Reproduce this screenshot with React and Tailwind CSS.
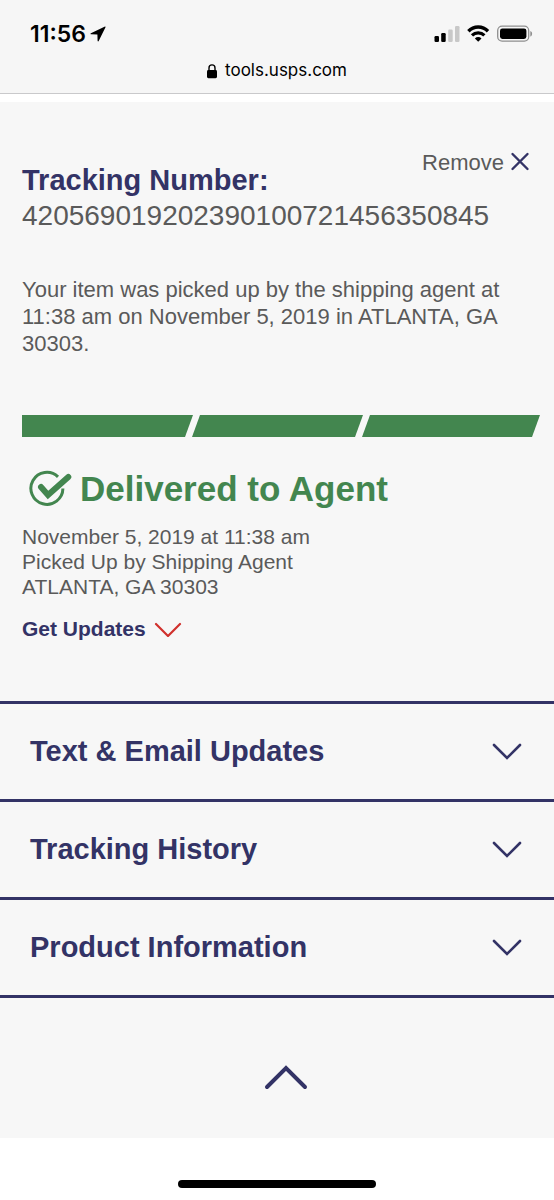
const accordionItems = ['Text & Email Updates', 'Tracking History', 'Product Information'];

function StatusIcons() {
    return (
        <svg width="100" height="18" viewBox="0 0 100 18" aria-hidden="true">
            {/* Signal */}
            <rect x="0.5" y="11" width="4.5" height="6" rx="1.2" fill="#000" />
            <rect x="7.2" y="8" width="4.5" height="9" rx="1.2" fill="#000" />
            <rect x="14.2" y="4.5" width="4.5" height="12.5" rx="1.2" fill="#c8c8c8" />
            <rect x="21" y="1" width="4.5" height="16" rx="1.2" fill="#c8c8c8" />
            {/* Wifi */}
            <path d="M34.4 6.2a13.6 13.6 0 0 1 19.6 0" fill="none" stroke="#000" strokeWidth="3.4" />
            <path d="M38 10.4a8.8 8.8 0 0 1 12.4 0" fill="none" stroke="#000" strokeWidth="3.2" />
            <path d="M44.2 16.8l-3.3-3.4a4.7 4.7 0 0 1 6.6 0z" fill="#000" />
            {/* Battery */}
            <rect x="63.7" y="1.2" width="31" height="15" rx="4.4" fill="none" stroke="#8f8f8f" strokeWidth="1.3" />
            <rect x="66" y="3.4" width="26.4" height="10.6" rx="2.4" fill="#000" />
            <path d="M96.3 6v5.6c1.1-.4 1.8-1.5 1.8-2.8s-.7-2.4-1.8-2.8z" fill="#8f8f8f" />
        </svg>
    );
}

function BrowserBar() {
    return (
        <header className="border-b border-[#c9c9cb] bg-[#f6f6f6] pt-5 pb-[10px] font-[Inter,sans-serif] text-black">
            <div className="flex h-7 items-center justify-between pr-5 pl-[30px]">
                <div className="flex items-center gap-1 text-[23px] font-semibold">
                    <span>11:56</span>
                    <svg width="16" height="16" viewBox="0 0 16 16" aria-hidden="true">
                        <path d="M15 0.6L0.9 7.3c-.6.3-.5 1 .2 1l6.3.2.2 6.3c0 .7.8.8 1.1.2L15.5 1.2c.2-.4-.1-.8-.5-.6z" fill="#000" />
                    </svg>
                </div>
                <StatusIcons />
            </div>
            <div className="mt-[11px] flex h-6 items-center justify-center gap-2 text-[17px]">
                <svg width="10" height="15" viewBox="0 0 10 15" aria-hidden="true">
                    <rect x="0" y="6" width="10" height="8.2" rx="1.4" fill="#000" />
                    <path d="M2 7V3.9a3 3 0 0 1 6 0V7" fill="none" stroke="#000" strokeWidth="1.4" />
                </svg>
                <span>tools.usps.com</span>
            </div>
        </header>
    );
}

function ProgressBar() {
    return (
        <div className="mt-[58px] grid h-[22px] grid-cols-3" role="progressbar" aria-label="Delivery progress" aria-valuenow={100}>
            <div className="-mr-px bg-[#43864f] [clip-path:polygon(0_0,100%_0,calc(100%-8px)_100%,0_100%)]" />
            <div className="-mr-px bg-[#43864f] [clip-path:polygon(8px_0,100%_0,calc(100%-8px)_100%,0_100%)]" />
            <div className="-mr-2 bg-[#43864f] [clip-path:polygon(8px_0,100%_0,calc(100%-8px)_100%,0_100%)]" />
        </div>
    );
}

function TrackingDetails() {
    return (
        <section className="px-[22px] pt-12">
            <div className="flex justify-end pr-0.5">
                <button type="button" className="flex h-6 items-center gap-1.5 text-[22px]">
                    Remove
                    <svg width="20" height="20" viewBox="0 0 20 20" aria-hidden="true">
                        <path d="M2.5 2l15 15M17.5 2l-15 15" stroke="#333366" strokeWidth="2.4" strokeLinecap="round" />
                    </svg>
                </button>
            </div>
            <h1 className="-mt-3 text-[29px] leading-9 font-bold text-[#333366]">Tracking Number:</h1>
            <p className="text-[28px] leading-9">420569019202390100721456350845</p>

            <p className="mt-[42px] text-[22px] leading-[27px]">
                Your item was picked up by the shipping agent at 11:38 am on November 5, 2019 in ATLANTA, GA 30303.
            </p>

            <ProgressBar />

            <h2 className="mt-8 flex items-center gap-2 pl-1.5 text-[35px] leading-10 font-bold text-[#43864f]">
                <svg width="44" height="38" viewBox="0 0 44 38" fill="none" stroke="currentColor" aria-hidden="true">
                    <path d="M30 6.8A16 16 0 1 0 34.9 18.5" strokeWidth="3" />
                    <path d="M13 17l7 8L40.3 7" strokeWidth="6" strokeLinecap="round" />
                </svg>
                Delivered to Agent
            </h2>
            <p className="mt-[15px] text-[21px] leading-[25px]">
                November 5, 2019 at 11:38 am
                <br />
                Picked Up by Shipping Agent
                <br />
                ATLANTA, GA 30303
            </p>
            <button type="button" className="mt-[18px] flex h-6 items-center gap-2 text-[21px] font-bold text-[#333366]">
                Get Updates
                <svg width="28" height="16" viewBox="0 0 28 16" fill="none" aria-hidden="true">
                    <path d="M2 3l12 12L26 3" stroke="#d0312d" strokeWidth="2.2" strokeLinecap="round" />
                </svg>
            </button>
        </section>
    );
}

export default function App() {
    return (
        <div className="min-h-screen bg-white font-['Liberation_Sans',Arial,sans-serif] text-[#5a5a5a]">
            <BrowserBar />

            <main className="mt-2 bg-[#f7f7f7]">
                <TrackingDetails />

                <div className="mt-[60px] border-b-[3px] border-[#333366]">
                    {accordionItems.map((title) => (
                        <h2 key={title} className="border-t-[3px] border-[#333366]">
                            <button
                                type="button"
                                aria-expanded="false"
                                className="flex h-[95px] w-full items-center justify-between pr-8 pl-[30px] text-left text-[29px] font-bold text-[#333366]"
                            >
                                {title}
                                <svg width="30" height="18" viewBox="0 0 30 18" fill="none" aria-hidden="true">
                                    <path d="M2 2l13 13L28 2" stroke="currentColor" strokeWidth="2.6" strokeLinecap="round" />
                                </svg>
                            </button>
                        </h2>
                    ))}
                </div>

                <div className="flex justify-center pt-[66px] pb-12 pl-[17px]">
                    <button type="button" aria-label="Back to top" className="text-[#333366]">
                        <svg width="44" height="26" viewBox="0 0 44 26" fill="none" aria-hidden="true">
                            <path d="M3 23L22 4l19 19" stroke="currentColor" strokeWidth="4" strokeLinecap="round" />
                        </svg>
                    </button>
                </div>
            </main>

            {/* Home indicator */}
            <div className="flex justify-center pt-[42px] pb-2">
                <div className="h-2 w-[198px] rounded-full bg-black" />
            </div>
        </div>
    );
}
